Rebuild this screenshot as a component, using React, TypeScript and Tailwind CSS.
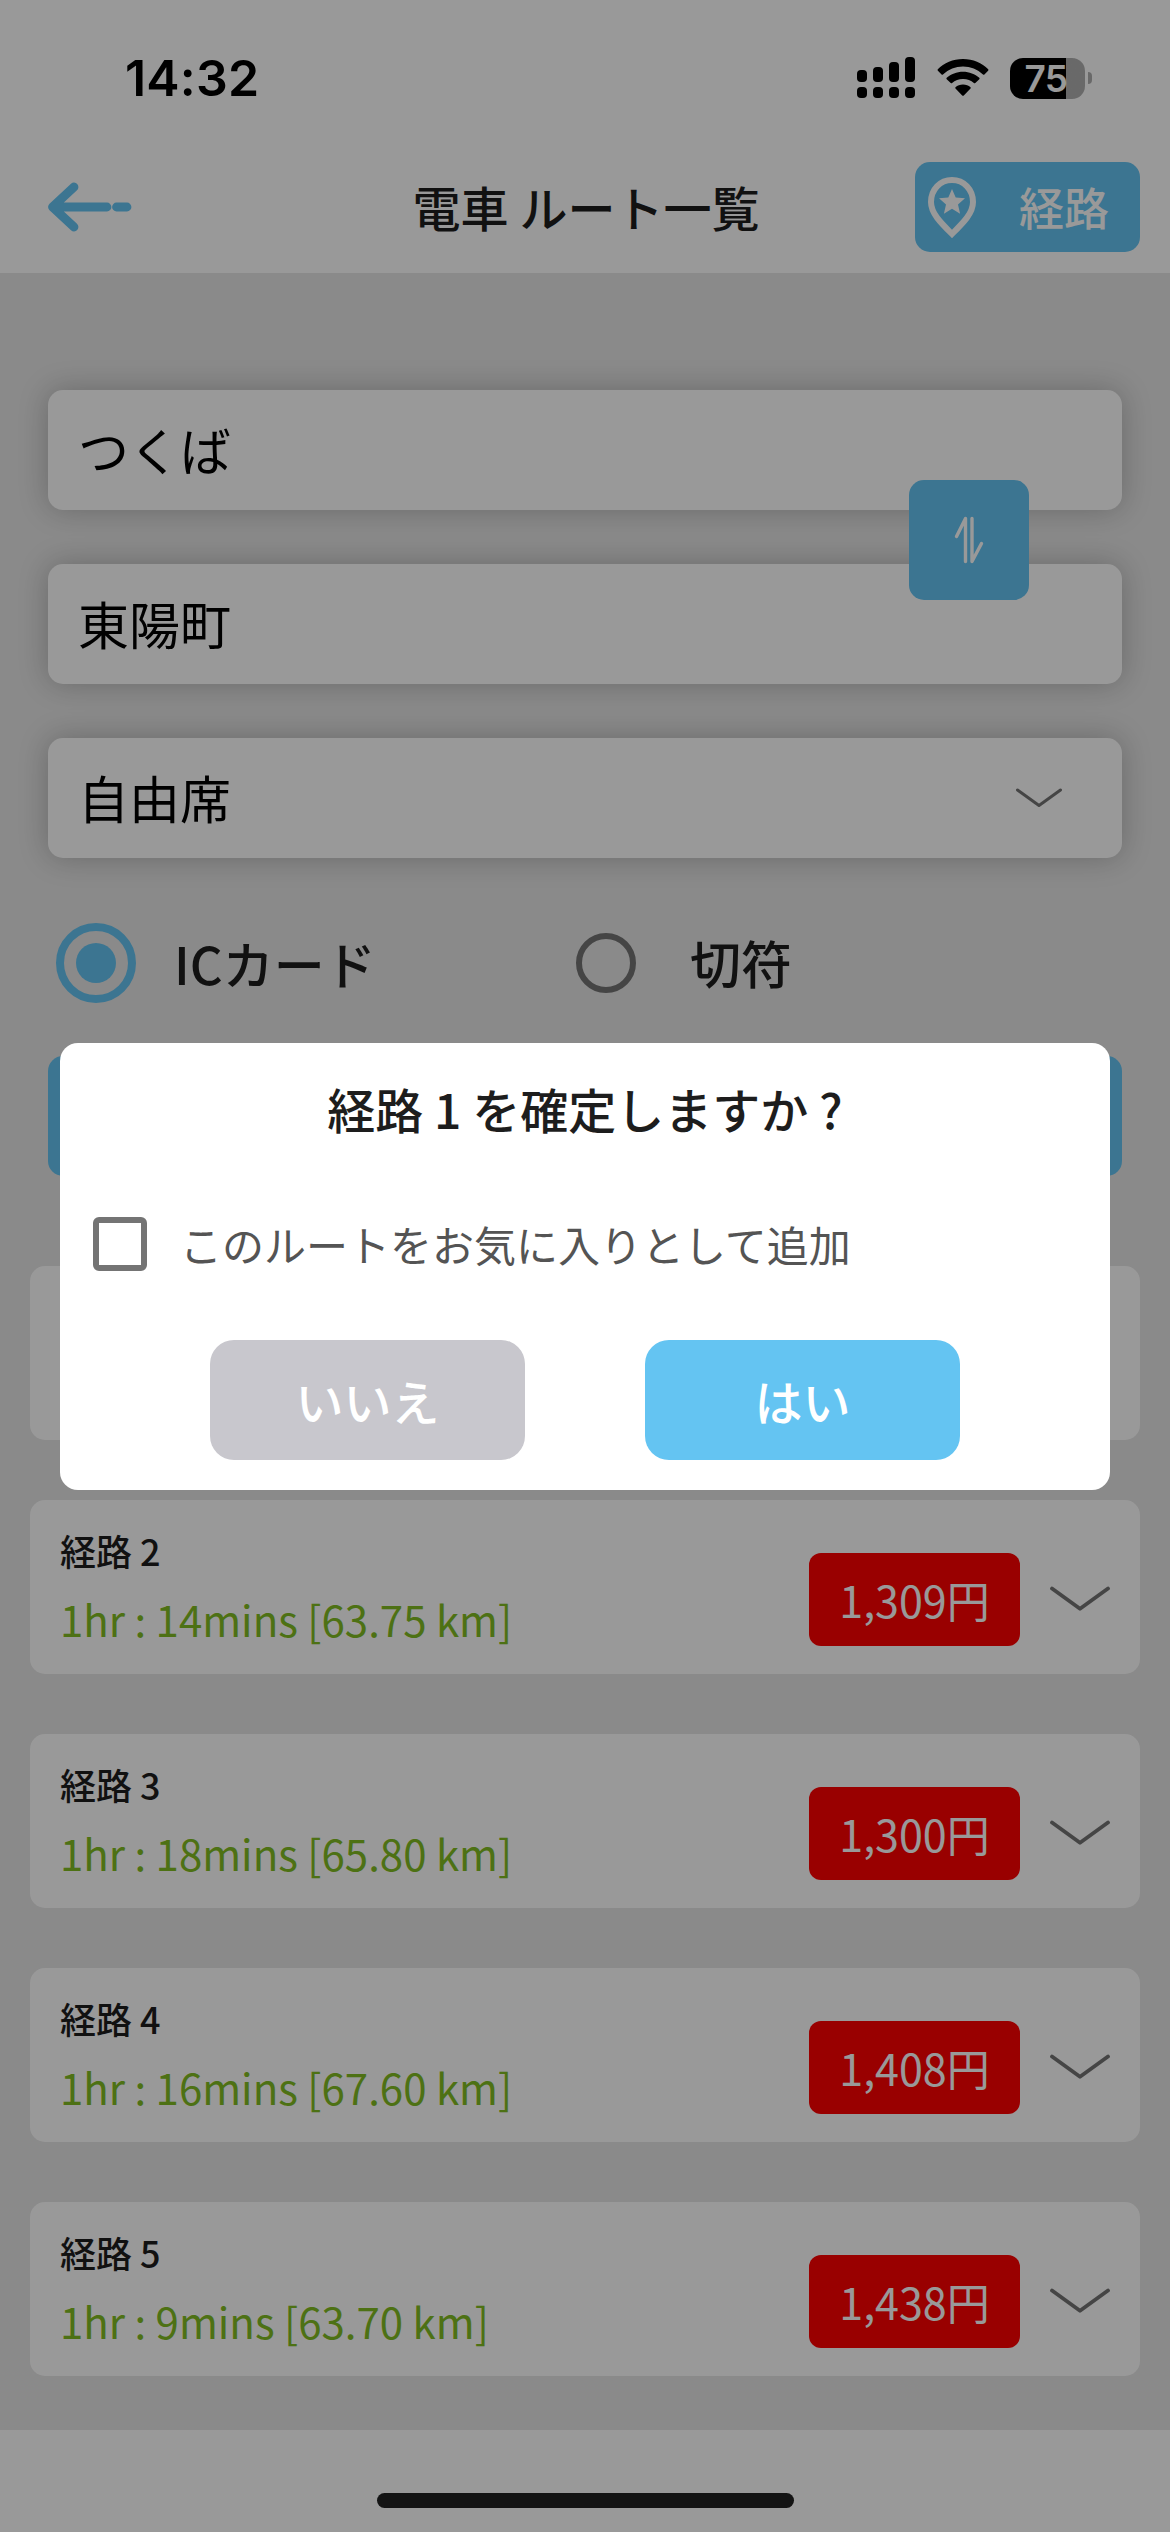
type Route = { no: number; time: string; km: string; price: string };

const routes: Route[] = [
  { no: 2, time: '1hr : 14mins', km: '63.75', price: '1,309' },
  { no: 3, time: '1hr : 18mins', km: '65.80', price: '1,300' },
  { no: 4, time: '1hr : 16mins', km: '67.60', price: '1,408' },
  { no: 5, time: '1hr : 9mins', km: '63.70', price: '1,438' },
];

function StatusBar() {
  return (
    <div className="flex h-[138px] items-start justify-between pl-[125px] pr-[78px]">
      <div className="mt-[48px] font-['Inter'] text-[50px] font-semibold leading-[60px] tracking-[0.2px] text-black">14:32</div>
      <div className="mt-[56px] flex items-center">
        <svg width="60" height="44" viewBox="0 0 60 44" className="mr-[20px]">
          {[14, 11, 6, 1].map((top, i) => (
            <g key={top}>
              <rect x={i * 16} y={top} width="10" height={26 - top} rx="4" />
              <rect x={i * 16} y="31" width="10" height="11" rx="4" />
            </g>
          ))}
        </svg>
        <svg width="52" height="44" viewBox="0 0 52 44" className="mr-[21px]">
          <path d="M26 3C16 3 7 7 .8 13.200Q.2 14 .9 14.800L4.600 18.400Q5.300 19 6 18.400C11.500 13.200 18.500 10.400 26 10.400S40.500 13.200 46 18.400Q46.700 19 47.400 18.400L51.100 14.800Q51.800 14 51.200 13.200C45 7 36 3 26 3Z" />
          <path d="M26 15.700C19.700 15.700 14 18 9.700 21.800Q9 22.500 9.700 23.200L13.700 27Q14.400 27.600 15.100 27C18 24.500 21.800 23.100 26 23.100S34 24.500 36.900 27Q37.600 27.600 38.300 27L42.300 23.200Q43 22.500 42.300 21.800C38 18 32.300 15.700 26 15.700Z" />
          <path d="M26 28.500C23 28.500 20.400 29.500 18.500 31.200Q17.800 31.900 18.500 32.600L25.200 39.500Q26 40.200 26.800 39.500L33.500 32.600Q34.200 31.900 33.500 31.200C31.600 29.500 29 28.500 26 28.500Z" />
        </svg>
        <div className="flex h-[41px] w-[75px] items-center justify-center rounded-[13px] bg-gradient-to-r from-black from-75% to-[#b0b0b0] to-75%">
          <span className="ml-[-3px] font-['Inter'] text-[37px] font-semibold leading-[41px] tracking-[-0.5px] text-white">75</span>
        </div>
        <div className="ml-[3px] h-[12px] w-[4px] rounded-r-full bg-[#b0b0b0]" />
      </div>
    </div>
  );
}

function Header() {
  return (
    <div className="grid h-[135px] grid-cols-[225px_1fr_225px] items-center px-[30px] pt-[3px]">
      <svg width="86" height="52" viewBox="0 0 86 52" fill="none" stroke="#64c4f2" strokeWidth="8.8" strokeLinecap="round" strokeLinejoin="round" className="ml-[17px]">
        <path d="M27 6 5.500 26 27 46M7 26h53M69.500 26h10.500" />
      </svg>
      <h1 className="pb-[2px] pl-[2px] text-center text-[48px] font-medium leading-[70px] text-[#1d1d1d]">電車 ルート一覧</h1>
      <button className="flex h-[90px] items-center rounded-[15px] bg-[#64c4f2] pl-[12px] text-[45px] font-medium leading-[66px] text-white">
        <svg width="50" height="62" viewBox="0 0 50 62" className="mr-[42px]">
          <path d="M25 4C13 4 4 13.500 4 26c0 11 9 20 21 32 12-12 21-21 21-32C46 13.500 37 4 25 4Z" fill="none" stroke="#fff" strokeWidth="6" />
          <path d="m25 13 3.700 8.500 9.300.8-7 6.200 2.100 9.200-8.100-4.900-8.100 4.900 2.100-9.200-7-6.200 9.300-.8Z" fill="#fff" />
        </svg>
        経路
      </button>
    </div>
  );
}

function Field({ text, select }: { text: string; select?: boolean }) {
  return (
    <div className="flex h-[120px] items-center justify-between rounded-[15px] bg-white pl-[30px] pr-[60px] text-[51px] leading-[74px] text-black shadow-[0_0_30px_rgba(0,0,0,0.24)]">
      <span className="mb-[2px]">{text}</span>
      {select && (
        <svg width="46" height="20" viewBox="0 0 46 20" fill="none" stroke="#747474" strokeWidth="3" strokeLinecap="round" strokeLinejoin="round">
          <path d="M1.500 2 23 17.500 44.500 2" />
        </svg>
      )}
    </div>
  );
}

function RouteCard({ route }: { route?: Route }) {
  return (
    <div className="flex h-[174px] shrink-0 rounded-[15px] bg-white px-[30px]">
      {route && (
        <>
          <div className="flex-1">
            <div className="mt-[24px] text-[36px] font-medium leading-[52px] text-[#1d1d1d]">経路 {route.no}</div>
            <div className="mt-[11px] text-[42px] leading-[63px] text-[#80bc22]">
              {route.time} [{route.km} km]
            </div>
          </div>
          <div className="mt-[53px] flex h-[93px] w-[211px] items-center justify-center rounded-[12px] bg-[#ff0000] pb-[1px] text-[43px] leading-[62px] text-white">
            {route.price}円
          </div>
          <svg width="60" height="26" viewBox="0 0 60 26" fill="none" stroke="#747474" strokeWidth="3.8" strokeLinecap="round" strokeLinejoin="round" className="ml-[30px] mt-[86px]">
            <path d="M2 2.500 30 22.800 58 2.500" />
          </svg>
        </>
      )}
    </div>
  );
}

function ConfirmDialog() {
  return (
    <div className="mt-px flex h-[447px] w-[1050px] flex-col rounded-[18px] bg-white">
      <h2 className="mt-[30px] text-center text-[48px] font-medium leading-[70px] text-[#1d1d1d]">経路 1 を確定しますか ?</h2>
      <label className="mt-[71px] flex h-[60px] items-center pl-[33px] text-[42px] leading-[60px] text-[#545454]">
        <span className="mr-[33px] h-[54px] w-[54px] rounded-[6px] border-[6px] border-[#747474]" />
        このルートをお気に入りとして追加
      </label>
      <div className="mt-[66px] flex justify-center gap-[120px] text-[48px] font-medium leading-[70px] text-white">
        <button className="h-[120px] w-[315px] rounded-[24px] bg-[#c8c7cd]">いいえ</button>
        <button className="h-[120px] w-[315px] rounded-[24px] bg-[#64c4f2]">はい</button>
      </div>
    </div>
  );
}

export default function App() {
  return (
    <div className="relative flex h-[2532px] w-[1170px] flex-col overflow-hidden bg-white font-['Noto_Sans_CJK_JP',sans-serif]" lang="ja">
      <StatusBar />
      <Header />
      <main className="flex h-[2157px] flex-col bg-[#e6e6e6] pt-[117px]">
        <div className="relative mx-[48px] flex flex-col gap-[54px]">
          <Field text="つくば" />
          <Field text="東陽町" />
          <Field text="自由席" select />
          <button className="absolute right-[93px] top-[90px] flex h-[120px] w-[120px] items-center justify-center rounded-[15px] bg-[#64c4f2]">
            <svg width="30" height="48" viewBox="0 0 30 48" fill="none" stroke="#fff" strokeWidth="3.4" strokeLinecap="round" strokeLinejoin="round">
              <path d="M2.500 20.500 11.500 2.500v43M18 2.500v43l9.500-18" />
            </svg>
          </button>
        </div>
        <div className="mt-[63px] flex h-[84px] items-center pl-[56px] text-[51px] font-medium leading-[74px] text-[#1d1d1d]">
          <span className="flex h-[80px] w-[80px] items-center justify-center rounded-full border-[8px] border-[#64c4f2]">
            <span className="h-[40px] w-[40px] rounded-full bg-[#64c4f2]" />
          </span>
          <span className="ml-[38px] w-[402px]">ICカード</span>
          <span className="h-[60px] w-[60px] rounded-full border-[6px] border-[#747474]" />
          <span className="mb-[3px] ml-[54px]">切符</span>
        </div>
        <button className="mx-[48px] mt-[51px] h-[120px] shrink-0 rounded-[15px] bg-[#64c4f2]" />
        <div className="mx-[30px] mt-[90px] flex flex-col gap-[60px]">
          <RouteCard />
          {routes.map((r) => (
            <RouteCard key={r.no} route={r} />
          ))}
        </div>
      </main>
      <div className="absolute inset-0 flex items-center justify-center bg-black/40">
        <ConfirmDialog />
      </div>
      <div className="absolute bottom-[24px] left-[377px] h-[15px] w-[417px] rounded-full bg-[#141414]" />
    </div>
  );
}
